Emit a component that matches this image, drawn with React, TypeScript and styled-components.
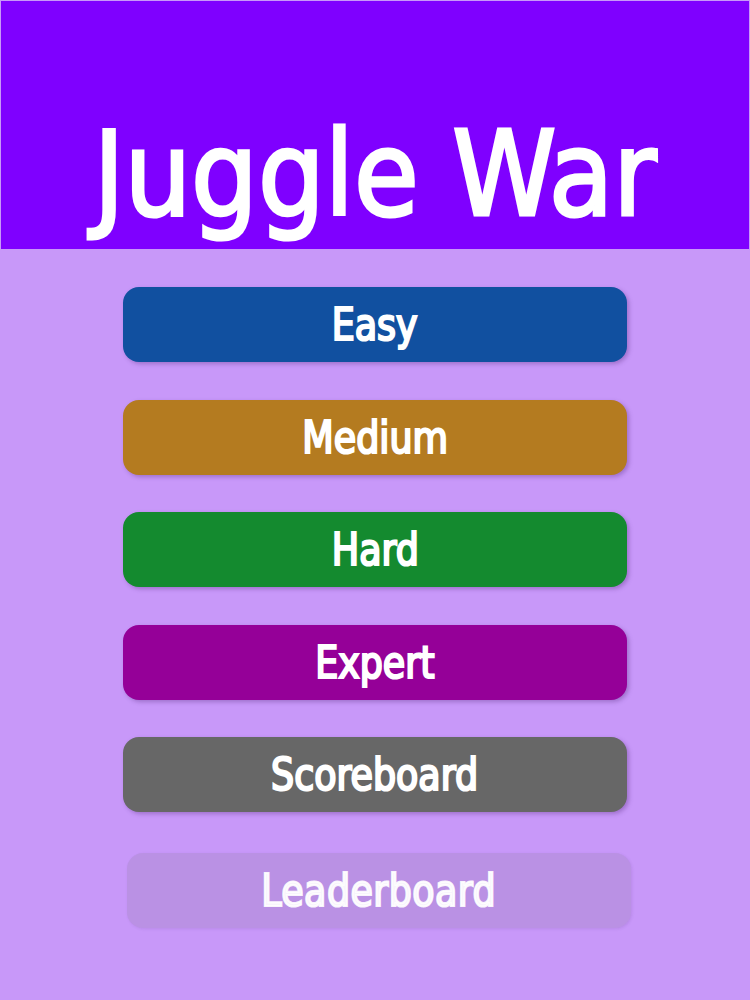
import styled, { createGlobalStyle } from 'styled-components'

const levels = [
  { label: 'Easy', color: '#1150a0' },
  { label: 'Medium', color: '#b47b20' },
  { label: 'Hard', color: '#148a2f' },
  { label: 'Expert', color: '#950098' },
  { label: 'Scoreboard', color: '#676767' },
]

const App = () => {
  return (
    <>
      <GLOBAL />
      <SCREEN>
        <HEADER>
          <TITLE>Juggle War</TITLE>
        </HEADER>
        <MENU>
          {levels.map((l) => (
            <MENU_BUTTON key={l.label} $bg={l.color}>
              <NARROW>{l.label}</NARROW>
            </MENU_BUTTON>
          ))}
          <LEADERBOARD disabled>
            <NARROW>Leaderboard</NARROW>
          </LEADERBOARD>
        </MENU>
      </SCREEN>
    </>
  )
}

export default App

const GLOBAL = createGlobalStyle`
  html, body {
    margin: 0;
    padding: 0;
    background-color: #c898f9;
  }
  * {
    box-sizing: border-box;
  }
`

const SCREEN = styled.div`
  width: 750px;
  min-height: 1000px;
  background-color: #c898f9;
  display: flex;
  flex-direction: column;
  font-family: 'DejaVu Sans Condensed', 'DejaVu Sans', sans-serif;
`

// the condensed face is still wider than the one we want, squeeze it a bit more
const NARROW = styled.span`
  display: inline-block;
  white-space: nowrap;
  transform: scaleX(0.92);
`

const HEADER = styled.header`
  height: 250px;
  background-color: #7f00ff;
  border: 1px solid #c898f9;
  padding-top: 115px;
  display: flex;
  justify-content: center;
`

const TITLE = styled.h1`
  margin: 0;
  color: white;
  font-weight: 400;
  font-size: 117px;
  line-height: 1;
  height: 117px;
  white-space: nowrap;
  -webkit-text-stroke: 3px white;
`

const MENU = styled.nav`
  display: flex;
  flex-direction: column;
  align-items: center;
  gap: 37.5px;
  padding-top: 37px;
`

const MENU_BUTTON = styled.button<{ $bg: string }>`
  width: 504px;
  height: 75px;
  border: none;
  border-radius: 16px;
  background-color: ${(props) => props.$bg};
  color: white;
  font-family: inherit;
  font-weight: 400;
  font-size: 44px;
  -webkit-text-stroke: 2.2px white;
  display: grid;
  place-items: center;
  padding: 0;
  box-shadow: 2px 2px 4px rgba(80, 40, 120, 0.35);
  cursor: pointer;
`

const LEADERBOARD = styled(MENU_BUTTON).attrs({ $bg: 'rgba(103, 103, 103, 0.14)' })`
  margin: 3.5px 0 0 8px;
  color: rgba(255, 255, 255, 0.92);
  -webkit-text-stroke: 2.2px rgba(255, 255, 255, 0.92);
  letter-spacing: 0.5px;
  box-shadow: 1px 1px 3px rgba(80, 40, 120, 0.12);
  cursor: default;
`
